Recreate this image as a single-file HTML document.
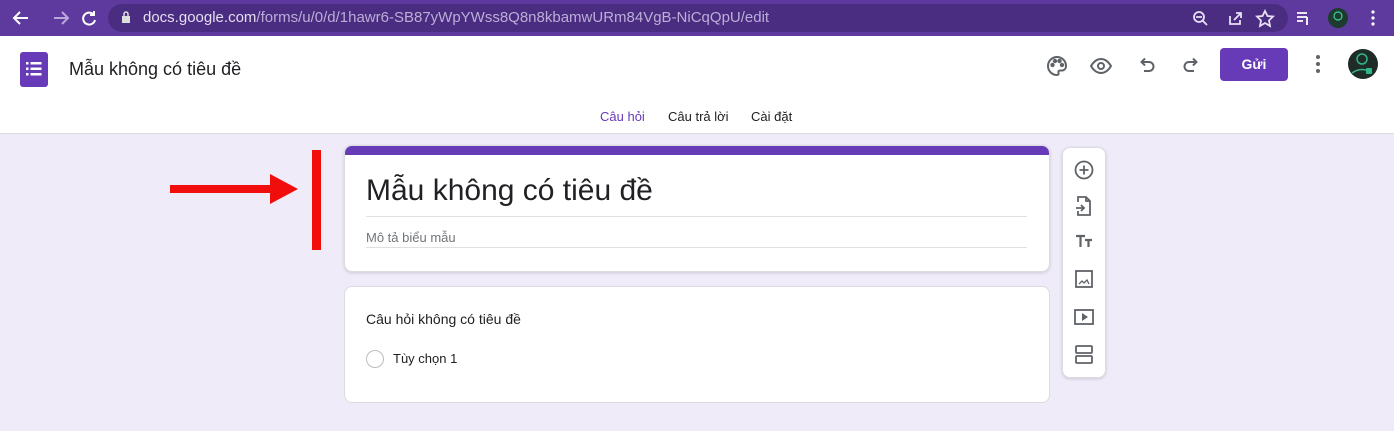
<!DOCTYPE html>
<html><head><meta charset="utf-8"><style>
*{box-sizing:border-box;margin:0;padding:0}
body{width:1394px;height:431px;overflow:hidden;background:#f0ebf8;font-family:"Liberation Sans","Noto Sans CJK SC",sans-serif;position:relative}
.abs{position:absolute}
.chrome{left:0;top:0;width:1394px;height:36px;background:#5e3a9e}
.addr{left:108px;top:4px;width:1180px;height:28px;border-radius:14px;background:#4a2c80}
.hdr{left:0;top:36px;width:1394px;height:98px;background:#fff;border-bottom:1px solid #dadce0}
.card{background:#fff;border:1px solid #dadce0;border-radius:8px}
svg{position:absolute}
</style></head><body>
<div class="abs chrome"></div>
<div class="abs addr"></div>
<svg style="left:10px;top:8px" width="90" height="20" fill="none" stroke="#fff" stroke-width="2">
<path d="M18 10H4M10 4L4 10l6 6"/><path d="M44 10h14M52 4l6 6-6 6" stroke="#b9a6db"/><path d="M84 7a6 6 0 1 0 1 5M84 3v4h-4"/></svg>
<svg style="left:121px;top:11px" width="10" height="13"><rect x="1" y="5" width="8" height="7" fill="#ddd"/><path d="M3 5V3a2 2 0 0 1 4 0v2" stroke="#ddd" fill="none" stroke-width="1.5"/></svg>
<div class="abs" style="left:143px;top:9px;font-size:15px;color:#e6def2">docs.google.com<span style="color:#bcaed8">/forms/u/0/d/1hawr6-SB87yWpYWss8Q8n8kbamwURm84VgB-NiCqQpU/edit</span></div>
<svg style="left:1190px;top:8px" width="200" height="22" fill="none" stroke="#e8e0f5" stroke-width="1.8">
<circle cx="9" cy="9" r="5"/><path d="M13 13l4 4M6 9h6"/>
<path d="M40 8v8h10v-4M44 12l6-6M46 5h5v5"/>
<path d="M75 3l2.5 5 5.5.5-4 4 1 5.5-5-3-5 3 1-5.5-4-4 5.5-.5z"/>
<path d="M107 5h10M107 9h10M107 13h6M117 9v8" stroke="#fff"/>
<circle cx="148" cy="10" r="10" fill="#1d3b2e" stroke="none"/><circle cx="148" cy="8" r="4" stroke="#3bd19a" stroke-width="1.2"/>
<circle cx="183" cy="4" r="1.6" fill="#fff" stroke="none"/><circle cx="183" cy="10" r="1.6" fill="#fff" stroke="none"/><circle cx="183" cy="16" r="1.6" fill="#fff" stroke="none"/></svg>
<div class="abs hdr"></div>
<div class="abs" style="left:20px;top:52px;width:28px;height:35px;background:#673ab7;border-radius:3px"></div>
<svg style="left:26px;top:61px" width="16" height="16" fill="#fff"><rect x="0" y="1" width="2.5" height="2.5"/><rect x="0" y="6.5" width="2.5" height="2.5"/><rect x="0" y="12" width="2.5" height="2.5"/><rect x="4.5" y="1" width="11" height="2.5"/><rect x="4.5" y="6.5" width="11" height="2.5"/><rect x="4.5" y="12" width="11" height="2.5"/></svg>
<div class="abs" style="left:69px;top:59px;font-size:18px;color:#202124">Mẫu không có tiêu đề</div>
<svg style="left:1045px;top:54px" width="160" height="24" fill="none" stroke="#5f6368" stroke-width="2">
<path d="M12 3a9 9 0 0 0 0 18c1.5 0 2-1 1.5-2s0-2.5 1.5-2.5h2.5A4.5 4.5 0 0 0 21 12 9 9 0 0 0 12 3z"/><circle cx="7.5" cy="11" r="1.2" fill="#5f6368"/><circle cx="10" cy="7" r="1.2" fill="#5f6368"/><circle cx="14.5" cy="7" r="1.2" fill="#5f6368"/><circle cx="17" cy="11" r="1.2" fill="#5f6368"/>
<path d="M46 12c3-5 6-7 10-7s7 2 10 7c-3 5-6 7-10 7s-7-2-10-7z"/><circle cx="56" cy="12" r="3"/>
<path d="M97 8h7a4.5 4.5 0 0 1 0 9h-5M100 4.5L96.5 8l3.5 3.5"/>
<path d="M151 8h-7a4.5 4.5 0 0 0 0 9h5M148 4.5l3.5 3.5-3.5 3.5"/></svg>
<div class="abs" style="left:1220px;top:48px;width:68px;height:33px;background:#673ab7;border-radius:4px;color:#fff;font-weight:bold;font-size:14px;text-align:center;line-height:33px">Gửi</div>
<svg style="left:1312px;top:48px" width="82" height="34"><circle cx="6" cy="9" r="2" fill="#5f6368"/><circle cx="6" cy="16" r="2" fill="#5f6368"/><circle cx="6" cy="23" r="2" fill="#5f6368"/><circle cx="51" cy="16" r="15" fill="#1e2b26"/><circle cx="50" cy="11" r="5" fill="none" stroke="#2fb58a" stroke-width="1.5"/><path d="M40 25q10-7 20 0" fill="none" stroke="#2fb58a" stroke-width="1.5"/><rect x="54" y="20" width="6" height="6" rx="1" fill="#2fb58a"/></svg>
<div class="abs" style="left:600px;top:109px;font-size:13px;color:#673ab7">Câu hỏi</div>
<div class="abs" style="left:668px;top:109px;font-size:13px;color:#202124">Câu trả lời</div>
<div class="abs" style="left:751px;top:109px;font-size:13px;color:#202124">Cài đặt</div>
<div class="abs card" style="left:344px;top:145px;width:706px;height:127px;overflow:hidden;box-shadow:0 1px 3px rgba(0,0,0,.15)"><div style="height:9px;background:#673ab7"></div></div>
<div class="abs" style="left:366px;top:174px;font-size:30px;color:#202124">Mẫu không có tiêu đề</div>
<div class="abs" style="left:366px;top:216px;width:661px;height:1px;background:#e0e0e0"></div>
<div class="abs" style="left:366px;top:230px;font-size:13px;color:#70757a">Mô tả biểu mẫu</div>
<div class="abs" style="left:366px;top:247px;width:661px;height:1px;background:#e0e0e0"></div>
<div class="abs card" style="left:344px;top:286px;width:706px;height:117px"></div>
<div class="abs" style="left:366px;top:311px;font-size:14px;color:#202124">Câu hỏi không có tiêu đề</div>
<div class="abs" style="left:366px;top:350px;width:18px;height:18px;border:1.5px solid #bdbdbd;border-radius:50%"></div>
<div class="abs" style="left:393px;top:351px;font-size:13px;color:#202124">Tùy chọn 1</div>
<div class="abs card" style="left:1062px;top:147px;width:44px;height:231px;box-shadow:0 1px 3px rgba(0,0,0,.15)"></div>
<svg style="left:1072px;top:158px" width="24" height="210" fill="none" stroke="#5f6368" stroke-width="1.8">
<circle cx="12" cy="12" r="8.5"/><path d="M12 7.5v9M7.5 12h9"/>
<path d="M6 44v-5h8l4 4v14H6v-4M14 39v4h4M4 50h8M9 47l3 3-3 3"/>
<path d="M4 78h9M8.5 78v11M13 82h7M16.5 82v7" stroke-width="2.2"/>
<rect x="4" y="113" width="16" height="16"/><path d="M7 126l3-3 2 2 3-3 2 4" stroke-width="1.3"/>
<rect x="3" y="152" width="18" height="14"/><path d="M10 155v8l6-4z" fill="#5f6368" stroke="none"/>
<rect x="4" y="188" width="16" height="7" rx="1"/><rect x="4" y="198" width="16" height="7" rx="1"/></svg>
<div class="abs" style="left:170px;top:185px;width:104px;height:8px;background:#f20d0d"></div>
<svg style="left:270px;top:174px" width="30" height="30"><path d="M0 0L28 15 0 30z" fill="#f20d0d"/></svg>
<div class="abs" style="left:312px;top:150px;width:9px;height:100px;background:#f20d0d"></div>
</body></html>
